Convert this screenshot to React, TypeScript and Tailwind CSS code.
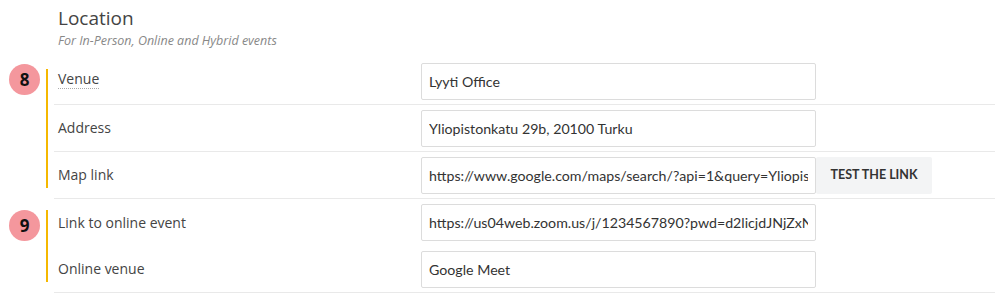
import React from "react";

type Field = {
  label: string;
  value: string;
  dotted?: boolean;
  button?: string;
  border?: boolean;
};

const groups: { badge: string; badgeTop: string; fields: Field[] }[] = [
  {
    badge: "8",
    badgeTop: "mt-[6px]",
    fields: [
      { label: "Venue", value: "Lyyti Office", dotted: true, border: true },
      { label: "Address", value: "Yliopistonkatu 29b, 20100 Turku", border: true },
      {
        label: "Map link",
        value: "https://www.google.com/maps/search/?api=1&query=Yliopistonkatu+29b",
        button: "TEST THE LINK",
        border: true,
      },
    ],
  },
  {
    badge: "9",
    badgeTop: "mt-[11px]",
    fields: [
      { label: "Link to online event", value: "https://us04web.zoom.us/j/1234567890?pwd=d2licjdJNjZxNWx" },
      { label: "Online venue", value: "Google Meet", border: true },
    ],
  },
];

function Row({ f }: { f: Field }) {
  return (
    <div className={`flex h-[47px] items-center pl-[4px] ${f.border ? "border-b border-[#e9e9e9]" : ""}`}>
      <div
        className={`w-[363px] shrink-0 font-['Open_Sans',sans-serif] text-[14px] leading-[20px] text-[#444] ${f.dotted ? "pb-[5px]" : ""}`}
      >
        <span className={f.dotted ? "inline-block border-b border-dotted border-[#aaa] leading-[18px]" : ""}>{f.label}</span>
      </div>
      <div className="flex">
        <input
          readOnly
          value={f.value}
          className="h-[37px] w-[395px] rounded-[2px] border border-[#dcdcdc] bg-white px-[7px] font-['Lato',sans-serif] text-[14.2px] text-[#333] outline-none"
        />
        {f.button && (
          <button className="h-[37px] w-[116px] rounded-[2px] bg-[#f3f4f5] font-['Lato',sans-serif] text-[12.5px] font-bold text-[#333]">
            {f.button}
          </button>
        )}
      </div>
    </div>
  );
}

export default function App() {
  return (
    <div className="min-h-[300px] bg-white pt-[5px]">
      <div className="pl-[58px]">
        <h2 className="font-['Open_Sans',sans-serif] text-[19px] leading-[26px] text-[#444]">Location</h2>
        <p className="mt-[2px] font-['Open_Sans',sans-serif] text-[12.5px] italic leading-[16px] text-[#888]">
          For In-Person, Online and Hybrid events
        </p>
      </div>
      <div className="mt-[9px]">
        {groups.map((g) => (
          <div key={g.badge} className="flex">
            <div className="w-[46px] shrink-0 pl-[9px]">
              <div
                className={`${g.badgeTop} flex h-[31px] w-[31px] items-center justify-center rounded-full bg-[#f4979d] font-['Open_Sans',sans-serif] text-[17px] font-bold text-[#111]`}
              >
                {g.badge}
              </div>
            </div>
            <div className="my-[11px] w-[2px] shrink-0 bg-[#f5b800]" />
            <div className="ml-[6px] flex-1">
              {g.fields.map((f) => (
                <Row key={f.label} f={f} />
              ))}
            </div>
          </div>
        ))}
      </div>
    </div>
  );
}
